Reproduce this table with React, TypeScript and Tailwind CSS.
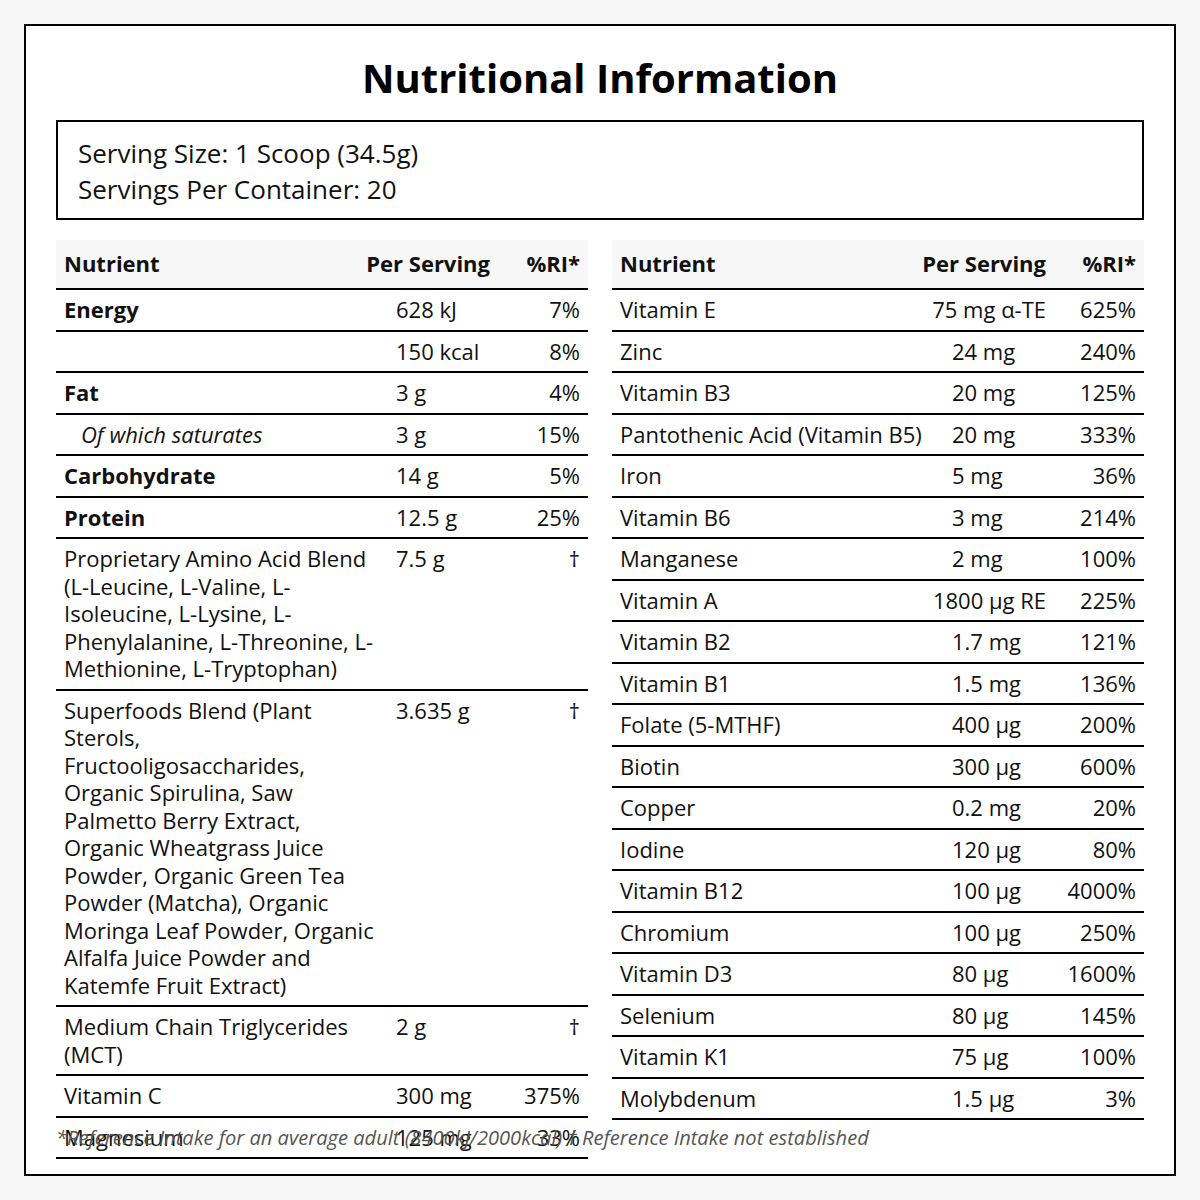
import React from 'react';

type Row = {
  name: string;
  amount: string;
  ri: string;
  style?: 'bold' | 'sub';
};

const leftRows: Row[] = [
  { name: 'Energy', amount: '628 kJ', ri: '7%', style: 'bold' },
  { name: '', amount: '150 kcal', ri: '8%' },
  { name: 'Fat', amount: '3 g', ri: '4%', style: 'bold' },
  { name: 'Of which saturates', amount: '3 g', ri: '15%', style: 'sub' },
  { name: 'Carbohydrate', amount: '14 g', ri: '5%', style: 'bold' },
  { name: 'Protein', amount: '12.5 g', ri: '25%', style: 'bold' },
  {
    name: 'Proprietary Amino Acid Blend (L-Leucine, L-Valine, L-Isoleucine, L-Lysine, L-Phenylalanine, L-Threonine, L-Methionine, L-Tryptophan)',
    amount: '7.5 g',
    ri: '†',
  },
  {
    name: 'Superfoods Blend (Plant Sterols, Fructooligosaccharides, Organic Spirulina, Saw Palmetto Berry Extract, Organic Wheatgrass Juice Powder, Organic Green Tea Powder (Matcha), Organic Moringa Leaf Powder, Organic Alfalfa Juice Powder and Katemfe Fruit Extract)',
    amount: '3.635 g',
    ri: '†',
  },
  { name: 'Medium Chain Triglycerides (MCT)', amount: '2 g', ri: '†' },
  { name: 'Vitamin C', amount: '300 mg', ri: '375%' },
  { name: 'Magnesium', amount: '125 mg', ri: '33%' },
];

const rightRows: Row[] = [
  { name: 'Vitamin E', amount: '75 mg α-TE', ri: '625%' },
  { name: 'Zinc', amount: '24 mg', ri: '240%' },
  { name: 'Vitamin B3', amount: '20 mg', ri: '125%' },
  { name: 'Pantothenic Acid (Vitamin B5)', amount: '20 mg', ri: '333%' },
  { name: 'Iron', amount: '5 mg', ri: '36%' },
  { name: 'Vitamin B6', amount: '3 mg', ri: '214%' },
  { name: 'Manganese', amount: '2 mg', ri: '100%' },
  { name: 'Vitamin A', amount: '1800 µg RE', ri: '225%' },
  { name: 'Vitamin B2', amount: '1.7 mg', ri: '121%' },
  { name: 'Vitamin B1', amount: '1.5 mg', ri: '136%' },
  { name: 'Folate (5-MTHF)', amount: '400 µg', ri: '200%' },
  { name: 'Biotin', amount: '300 µg', ri: '600%' },
  { name: 'Copper', amount: '0.2 mg', ri: '20%' },
  { name: 'Iodine', amount: '120 µg', ri: '80%' },
  { name: 'Vitamin B12', amount: '100 µg', ri: '4000%' },
  { name: 'Chromium', amount: '100 µg', ri: '250%' },
  { name: 'Vitamin D3', amount: '80 µg', ri: '1600%' },
  { name: 'Selenium', amount: '80 µg', ri: '145%' },
  { name: 'Vitamin K1', amount: '75 µg', ri: '100%' },
  { name: 'Molybdenum', amount: '1.5 µg', ri: '3%' },
];

function NutrientTable({ rows }: { rows: Row[] }) {
  return (
    <div className="flex flex-col">
      {/* Header */}
      <div className="grid grid-cols-[1fr_110px_90px] bg-[#f7f7f7] border-b-2 border-black font-bold leading-[27.5px]">
        <div className="px-2 py-[10.25px]">Nutrient</div>
        <div className="px-2 py-[10.25px] flex justify-end">
          <span className="shrink-0 whitespace-nowrap">Per Serving</span>
        </div>
        <div className="px-2 py-[10.25px] text-right">%RI*</div>
      </div>

      {rows.map((row, i) => (
        <div key={i} className="grid grid-cols-[1fr_110px_90px] border-b-2 border-black leading-[27.5px]">
          <div
            className={
              row.style === 'bold'
                ? 'px-2 py-1.5 font-bold'
                : row.style === 'sub'
                  ? 'pl-[25px] pr-2 py-1.5 italic'
                  : 'px-2 py-1.5'
            }
          >
            {row.name}
          </div>
          <div className="px-2 py-1.5 flex justify-end items-start">
            <span className="shrink-0 whitespace-nowrap min-w-[94px]">{row.amount}</span>
          </div>
          <div className="px-2 py-1.5 text-right">{row.ri}</div>
        </div>
      ))}
    </div>
  );
}

export default function App() {
  return (
    <div className="min-h-screen bg-[#f5f5f5] p-6 font-['Open_Sans',sans-serif] text-[#111]">
      <div className="h-[1152px] border-2 border-black bg-white px-[30px] pt-[28px]">
        <h1 className="text-center text-[40px] leading-[48px] font-bold text-black mb-[18px]">
          Nutritional Information
        </h1>

        <div className="border-2 border-black px-5 pt-[12.5px] pb-[11.5px] text-[26px] leading-[36px] mb-[20px]">
          <div>Serving Size: 1 Scoop (34.5g)</div>
          <div>Servings Per Container: 20</div>
        </div>

        <div className="grid grid-cols-2 gap-6 h-[880px] text-[22px]">
          <NutrientTable rows={leftRows} />
          <NutrientTable rows={rightRows} />
        </div>

        <p className="mt-1 text-[20.1px] leading-[27px] italic text-[#555]">
          *Reference Intake for an average adult (8400kJ/2000kcal) † Reference Intake not established
        </p>
      </div>
    </div>
  );
}
